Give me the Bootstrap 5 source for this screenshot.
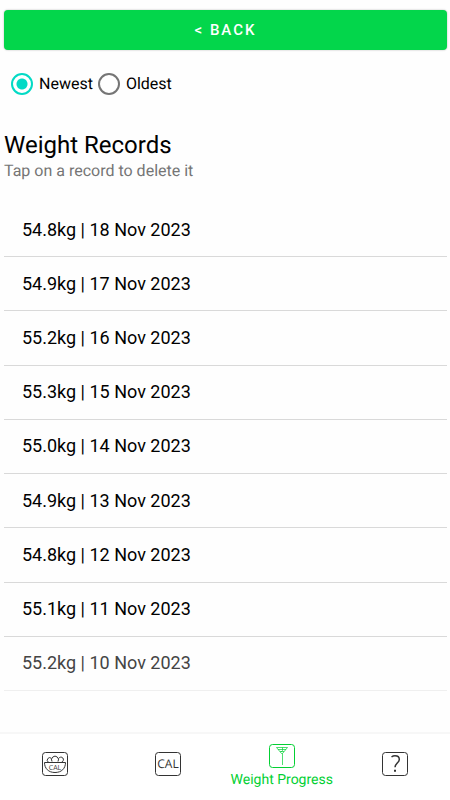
<!DOCTYPE html>
<html lang="en">
<head>
<meta charset="utf-8">
<meta name="viewport" content="width=device-width, initial-scale=1">
<title>Weight Records</title>
<link href="https://cdn.jsdelivr.net/npm/bootstrap@5.3.0/dist/css/bootstrap.min.css" rel="stylesheet">
<style>
  body { font-family: Roboto, "Liberation Sans", sans-serif; color: #000; background: #fefefe; text-rendering: geometricPrecision; }
  main { padding: 10px 3px 41px 4px; }
  .btn-back { height: 40px; background: #03d64b; border-radius: 4px; font-size: 15px; font-weight: 500; letter-spacing: 2px; line-height: 20px; box-shadow: 0 0 2px rgba(0,0,0,.3); }
  .btn-back, .btn-back:hover { color: #fff; background: #03d64b; }
  .sort-row { padding: 22px 7px 0; gap: 5px; font-size: 16px; line-height: 24px; }
  .sort-row .form-check-input { width: 22px; height: 22px; margin: 0 6px 0 0; border: 2px solid #757575; background: #fff; float: none; box-shadow: none; }
  .sort-row .form-check-input:checked { border-color: #03dac5; background: radial-gradient(circle, #03dac5 5px, #fff 6px); }
  .page-title { font-size: 24px; line-height: 30px; margin: 34px 0 0; font-weight: 400; }
  .hint { font-size: 16px; line-height: 22px; color: #757575; margin: 0 0 21px; }
  .records .list-group-item { flex: 1 1 50px; display: flex; align-items: center; padding: 0 18px; font-size: 18px; line-height: 24px; color: #000; background: transparent; border: 0; border-bottom: 1px solid #d9d9d9; }
  .records .list-group-item:last-child { color: #444; border-bottom: 1px solid #efefef; }
  .tabs { height: 68px; border-top: 2px solid #f7f7f7; background: #fff; overflow: hidden; }
  .tabs ul { margin: 0 -2px; height: 100%; }
  .tabs .nav-link { height: 100%; padding: 0 0 6px; color: #333; font-size: 14px; line-height: 18px; }
  .tabs .nav-link.active { color: #03d033; padding-bottom: 2px; }
  .tabs svg { width: 28px; height: 26px; }
  .tabs .active svg { margin-bottom: 2px; }
  .tabs svg text { font-family: "Open Sans", sans-serif; fill: currentColor; stroke: none; }
</style>
<script src="https://cdn.jsdelivr.net/npm/bootstrap@5.3.0/dist/js/bootstrap.bundle.min.js" defer></script>
</head>
<body class="d-flex flex-column min-vh-100">
<main class="d-flex flex-column flex-grow-1">
  <button type="button" class="btn btn-back w-100 border-0">&lt; BACK</button>
  <div class="sort-row d-flex">
    <div class="d-flex align-items-center"><input class="form-check-input" type="radio" name="sort" id="newest" checked><label for="newest">Newest</label></div>
    <div class="d-flex align-items-center"><input class="form-check-input" type="radio" name="sort" id="oldest"><label for="oldest">Oldest</label></div>
  </div>
  <h1 class="page-title">Weight Records</h1>
  <p class="hint">Tap on a record to delete it</p>
  <div class="records list-group list-group-flush flex-grow-1">
    <button type="button" class="list-group-item list-group-item-action">54.8kg | 18 Nov 2023</button>
    <button type="button" class="list-group-item list-group-item-action">54.9kg | 17 Nov 2023</button>
    <button type="button" class="list-group-item list-group-item-action">55.2kg | 16 Nov 2023</button>
    <button type="button" class="list-group-item list-group-item-action">55.3kg | 15 Nov 2023</button>
    <button type="button" class="list-group-item list-group-item-action">55.0kg | 14 Nov 2023</button>
    <button type="button" class="list-group-item list-group-item-action">54.9kg | 13 Nov 2023</button>
    <button type="button" class="list-group-item list-group-item-action">54.8kg | 12 Nov 2023</button>
    <button type="button" class="list-group-item list-group-item-action">55.1kg | 11 Nov 2023</button>
    <button type="button" class="list-group-item list-group-item-action">55.2kg | 10 Nov 2023</button>
  </div>
</main>
<nav class="tabs" aria-label="Main">
  <ul class="nav nav-fill flex-nowrap">
    <li class="nav-item col-3"><a class="nav-link d-flex flex-column align-items-center justify-content-center" href="#food" aria-label="Food calories">
      <svg viewBox="0 0 28 26" fill="none" stroke="currentColor"><rect x="1.5" y="1.5" width="25" height="23" rx="3"/><path d="M3.500 11.500h21c0 6-4 10-10.500 10S3.500 17.500 3.500 11.500z"/><path d="M7.200 11a2.400 2.400 0 1 1 3-3.800M17.700 7.500a2.500 2.500 0 1 1 3 3.500M11 10.500a3.500 3.500 0 1 1 6 0"/><text x="14" y="18.500" font-size="7" text-anchor="middle">CAL</text></svg></a></li>
    <li class="nav-item col-3"><a class="nav-link d-flex flex-column align-items-center justify-content-center" href="#calories" aria-label="Calories">
      <svg viewBox="0 0 28 26" fill="none" stroke="currentColor"><rect x="1.5" y="1.5" width="25" height="23" rx="3"/><text x="14" y="17" font-size="12" text-anchor="middle">CAL</text></svg></a></li>
    <li class="nav-item col-3"><a class="nav-link active d-flex flex-column align-items-center justify-content-center" href="#weight" aria-current="page">
      <svg viewBox="0 0 28 26" fill="none" stroke="currentColor"><rect x="1.5" y="1.5" width="25" height="23" rx="3"/><path stroke-width=".7" d="M8.500 4.500h11l-5 6h-1zM10 6.500h8M14.500 4.500v3l-1.500 1.500M12 8.500h4M14.500 10.500v11.500"/></svg>
      <span class="text-nowrap">Weight Progress</span></a></li>
    <li class="nav-item col-3"><a class="nav-link d-flex flex-column align-items-center justify-content-center" href="#help" aria-label="Help">
      <svg viewBox="0 0 28 26" fill="none" stroke="currentColor"><rect x="1.5" y="1.5" width="25" height="23" rx="3"/><path stroke-width="1.500" d="M10.500 6c1-.8 2-1.200 3.500-1.200 2.700 0 4.300 1.400 4.300 3.600 0 3.300-4.300 3.900-4.300 7.800"/><path stroke-width="2" d="M14 18.800v2"/></svg></a></li>
  </ul>
</nav>
</body>
</html>
